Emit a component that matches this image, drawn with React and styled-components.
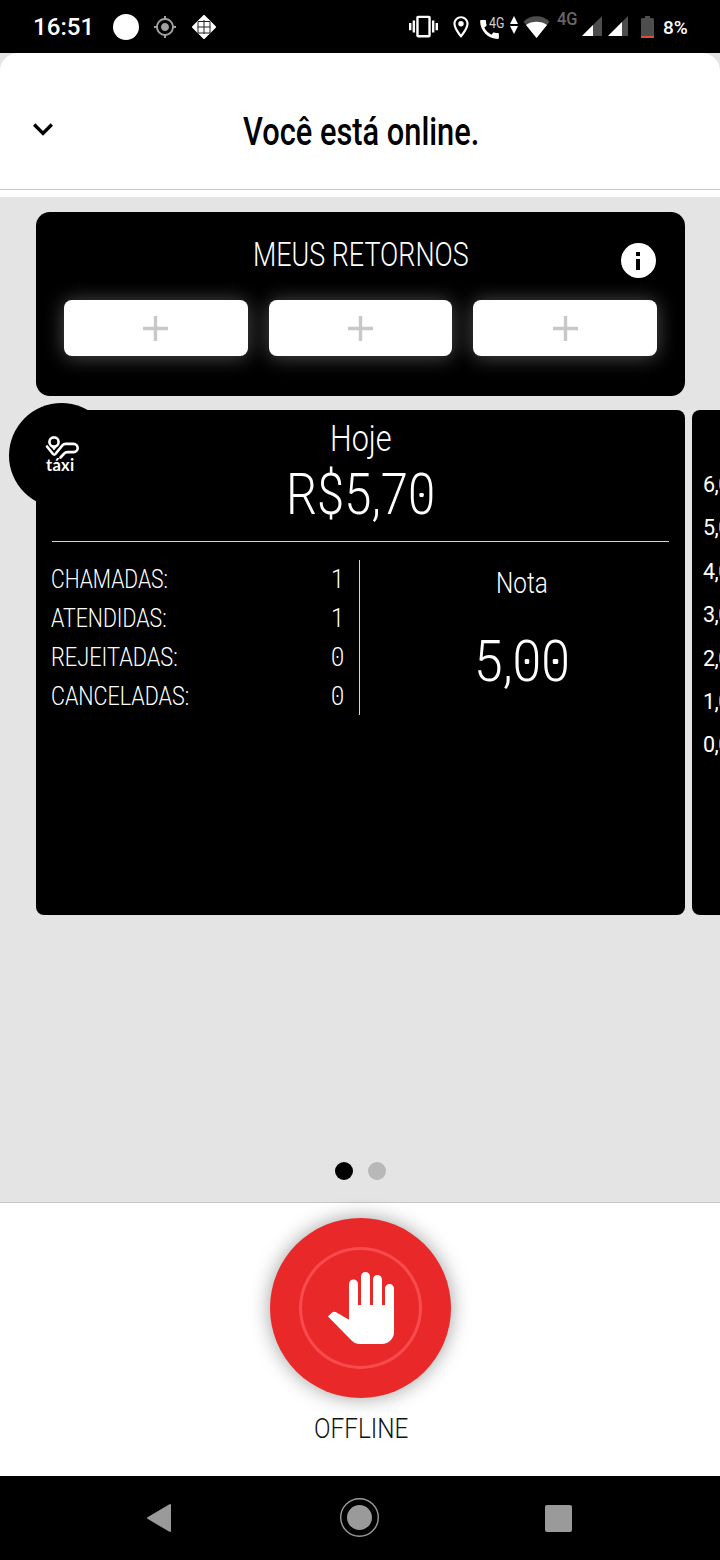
import React, { useLayoutEffect, useRef, useState } from "react";
import styled, { createGlobalStyle } from "styled-components";
import {
    MdVibration,
    MdOutlineLocationOn,
    MdCall,
    MdMyLocation,
    MdExpandMore,
    MdPanTool,
} from "react-icons/md";

const GlobalStyle = createGlobalStyle`
  * {
    box-sizing: border-box;
  }
  body {
    margin: 0;
    background: #000000;
    font-family: Roboto, "Liberation Sans", sans-serif;
  }
  svg {
    display: block;
    flex: none;
  }
`
const Screen = styled.div`
    width: 720px;
    height: 1560px;
    display: flex;
    flex-direction: column;
    background: #e4e4e4;
    overflow: hidden;
`

/* status bar */
const StatusBar = styled.div`
    height: 53px;
    flex: none;
    display: flex;
    justify-content: space-between;
    background: #000000;
    color: #ffffff;
    padding: 0 32px 0 33px;
`
const StatusGroup = styled.div`
    display: flex;
    align-items: center;
    height: 53px;
`
const StatusItem = styled.div`
    display: flex;
    flex: none;
    margin-left: ${(props) => props.$gap || 0}px;
    padding-top: ${(props) => props.$down || 0}px;
    padding-bottom: ${(props) => props.$up || 0}px;
    color: ${(props) => props.$color || '#ffffff'};
`
const WhiteDot = styled.div`
    width: 26px;
    height: 26px;
    border-radius: 50%;
    background: #ffffff;
`

/* text */
const FitBox = styled.span`
    display: block;
    flex: none;
    width: ${(props) => props.$width}px;
    height: ${(props) => props.$line}px;
    line-height: ${(props) => props.$line}px;
    font-size: ${(props) => props.$size}px;
    font-weight: ${(props) => props.$weight};
    color: ${(props) => props.$color};
`
const FitInner = styled.span`
    display: inline-block;
    white-space: pre;
    transform-origin: left center;
`
const Zero = styled.span`
    position: relative;
    display: inline-block;

    &::after {
      content: '';
      position: absolute;
      left: 50%;
      top: 50%;
      width: 0.09em;
      height: 0.075em;
      margin: -0.04em 0 0 -0.045em;
      border-radius: 30%;
      background: currentColor;
    }
`

/* header */
const Header = styled.header`
    height: 137px;
    flex: none;
    display: grid;
    grid-template-columns: 40px 1fr 40px;
    align-items: center;
    justify-items: center;
    padding: 22px 22px 0 23px;
    background: #ffffff;
    border-bottom: 1px solid #c6c6c6;
    border-radius: 18px 18px 0 0;
`
const HeaderGap = styled.div`
    height: 7px;
    flex: none;
    background: #ffffff;
`
const BackIcon = styled.div`
    color: #000000;
    margin-top: -7px;
`

/* content */
const Content = styled.main`
    flex: 1;
    display: flex;
    flex-direction: column;
    padding-top: 15px;
`
const ReturnsPanel = styled.section`
    width: 649px;
    height: 184px;
    flex: none;
    margin-left: 36px;
    padding: 24px 28px 0;
    border-radius: 14px;
    background: #000000;
`
const ReturnsHead = styled.div`
    display: grid;
    grid-template-columns: 37px 1fr 37px;
    justify-items: center;
    height: 64px;
`
const InfoIcon = styled.div`
    width: 35px;
    height: 35px;
    margin: 7px 1px 0 0;
    border-radius: 50%;
    background: #ffffff;
    display: flex;
    flex-direction: column;
    align-items: center;
    gap: 3px;
    padding-top: 9px;
`
const InfoMark = styled.span`
    width: 3.6px;
    height: ${(props) => props.$height}px;
    background: #000000;
`
const SlotList = styled.div`
    display: grid;
    grid-template-columns: repeat(3, 1fr);
    gap: 21px;
`
const Slot = styled.div`
    height: 56px;
    border-radius: 8px;
    background: #ffffff;
    box-shadow: 0 1px 20px rgba(255, 255, 255, 0.32);
    display: flex;
    align-items: center;
    justify-content: center;
`
const Carousel = styled.div`
    display: flex;
    gap: 7px;
    margin-top: 14px;
    padding-left: 36px;
`
const Card = styled.section`
    position: relative;
    width: 649px;
    height: 505px;
    flex: none;
    border-radius: 8px;
    background: #000000;
    color: #ffffff;
    padding: 0 16px;
`
const TaxiBadge = styled.div`
    position: absolute;
    left: -27px;
    top: -7px;
    width: 105px;
    height: 105px;
    border-radius: 50%;
    background: #000000;
    padding: 32px 0 0 36px;
`
const TaxiLabel = styled.div`
    font-family: Lato, sans-serif;
    font-size: 16.5px;
    line-height: 14px;
    font-weight: 700;
    letter-spacing: 0.3px;
    margin: -3px 0 0 1px;
`
const Summary = styled.div`
    height: 132px;
    display: flex;
    flex-direction: column;
    align-items: center;
    padding-top: 8px;
    border-bottom: 1px solid #d4d4d4;
`
const Details = styled.div`
    display: flex;
    padding-top: 18px;
`
const CountList = styled.div`
    width: 308px;
    height: 155px;
    padding-right: 15px;
    border-right: 1px solid #d4d4d4;
`
const CountRow = styled.div`
    display: flex;
    justify-content: space-between;
    height: 39px;
    margin-left: -1px;
`
const Rating = styled.div`
    flex: 1;
    display: flex;
    flex-direction: column;
    align-items: center;
    padding: 3px 0 0 15px;
`
const Axis = styled.div`
    padding: 53px 0 0 0;
    margin-left: -5px;
    font-size: 21.5px;
    letter-spacing: -0.5px;
`
const AxisLabel = styled.div`
    height: 43.4px;
    line-height: 44.5px;
`
const Pager = styled.div`
    display: flex;
    justify-content: center;
    gap: 15px;
    margin-top: auto;
    padding: 0 0 22px 1px;
`
const PagerDot = styled.span`
    width: 18px;
    height: 18px;
    border-radius: 50%;
    background: ${(props) => (props.$active ? '#000000' : '#b8b8b8')};
`

/* bottom */
const Footer = styled.footer`
    height: 274px;
    flex: none;
    display: flex;
    flex-direction: column;
    align-items: center;
    padding: 15px 0 0 1px;
    background: #ffffff;
    border-top: 1px solid #c8c8c8;
`
const OfflineButton = styled.button`
    width: 181px;
    height: 180px;
    flex: none;
    display: flex;
    align-items: center;
    justify-content: center;
    padding: 0;
    border: none;
    border-radius: 50%;
    background: #e92929;
    box-shadow: 0 0 20px rgba(0, 0, 0, 0.38);
`
const ButtonRing = styled.span`
    width: 123px;
    height: 122px;
    display: flex;
    align-items: center;
    justify-content: center;
    border: 3px solid #f94b4d;
    border-radius: 50%;
    color: #ffffff;
`
const FooterLabel = styled.div`
    margin-top: 13px;
`
const NavBar = styled.nav`
    height: 84px;
    flex: none;
    display: grid;
    grid-template-columns: 1fr 40px 1fr;
    align-items: center;
    background: #000000;
`
const NavCell = styled.div`
    display: flex;
    justify-content: ${(props) => props.$align || 'center'};
    padding: ${(props) => props.$pad || '0'};
`

// squeezes a line of text to the given width, the letters keep their height
function FitText({ text, width, size, line, weight = 400, color = '#ffffff', dotted }) {
    const inner = useRef(null);
    const [scale, setScale] = useState(1);

    useLayoutEffect(() => {
        setScale(width / inner.current.offsetWidth);
    }, [text, width, size]);

    return (
        <FitBox $width={width} $size={size} $line={line || Math.round(size * 1.2)} $weight={weight} $color={color}>
            <FitInner ref={inner} style={{ transform: `scaleX(${scale})` }}>
                {dotted
                    ? text.split('').map((char, index) => char === '0' ? <Zero key={index}>0</Zero> : char)
                    : text}
            </FitInner>
        </FitBox>
    );
}

function DiamondIcon() {
    return (
        <svg width="24" height="24" viewBox="0 0 24 24">
            <path d="M12 1 23 12 12 23 1 12z" fill="#fff" stroke="#fff" strokeWidth="2" strokeLinejoin="round" />
            <path d="M12 5v14M5.500 12h13M6 6.500h12v11.500H6z" fill="none" stroke="#222" strokeWidth="1" />
        </svg>
    );
}

function DataArrows() {
    return (
        <svg width="8" height="18" viewBox="0 0 8 18" fill="#fff">
            <path d="M4 0 8 8H0zM0 10h8l-4 8z" />
        </svg>
    );
}

function WifiIcon() {
    return (
        <svg width="27" height="22" viewBox="0 0 27 22">
            <path d="M13.500 22 0.500 5.800C4 2 8.500 0.300 13.500 0.300S23 2 26.500 5.800z" fill="#4d4d4d" />
            <path d="M13.500 22 3 9c3-2.400 6.700-3.300 10.500-3.300S21 6.600 24 9z" fill="#fff" />
        </svg>
    );
}

function SignalIcon({ level }) {
    return (
        <svg width="20" height="20" viewBox="0 0 20 20">
            <path d="M20 0v20H0z" fill="#4d4d4d" />
            <path d={`M${level} ${20 - level}V20H0z`} fill="#fff" />
        </svg>
    );
}

function BatteryIcon() {
    return (
        <svg width="13" height="22" viewBox="0 0 13 22">
            <path d="M4 0h5v2h2.500a1.500 1.500 0 0 1 1.500 1.500V20H0V3.500A1.500 1.500 0 0 1 1.500 2H4z" fill="#4d4d4d" />
            <path d="M0 20h13v2H0z" fill="#d9503f" />
        </svg>
    );
}

function PlusIcon() {
    return (
        <svg width="25" height="25" viewBox="0 0 25 25">
            <path d="M12.500 0v25M0 12.500h25" stroke="#c8c8c8" strokeWidth="3.400" />
        </svg>
    );
}

function TaxiLogo() {
    return (
        <svg width="35" height="26" viewBox="0 0 35 26" fill="none" stroke="#fff">
            <path d="M3.600 8.200 9 15.600l5.400-7.400z" fill="#fff" stroke="none" />
            <circle cx="9" cy="7" r="4.600" fill="#000" strokeWidth="2.600" />
            <path d="M2 11.500 8 19q1.200 1.400 2.400 0L17.400 10.400q1.200-1.500 3.200-1.500h8a4.100 4.100 0 0 1 0 8.200h-6.200q-2 0-3.200 1.400L15.500 22.500" strokeWidth="2.600" strokeLinecap="round" strokeLinejoin="round" />
        </svg>
    );
}

const counts = [
    { label: 'CHAMADAS:', value: '1', width: 117 },
    { label: 'ATENDIDAS:', value: '1', width: 116 },
    { label: 'REJEITADAS:', value: '0', width: 127 },
    { label: 'CANCELADAS:', value: '0', width: 138 },
]
const axisValues = ['6,00', '5,00', '4,00', '3,00', '2,00', '1,00', '0,00']

function App() {
    return ( <>
        <GlobalStyle />
        <Screen>
            <StatusBar>
                <StatusGroup>
                    <FitText text="16:51" width={61} size={24.5} weight={500} line={54} />
                    <StatusItem $gap={19}><WhiteDot /></StatusItem>
                    <StatusItem $gap={14} $color="#a0a0a0"><MdMyLocation size={24} /></StatusItem>
                    <StatusItem $gap={15}><DiamondIcon /></StatusItem>
                </StatusGroup>
                <StatusGroup>
                    <StatusItem><MdVibration size={29} /></StatusItem>
                    <StatusItem $gap={10}><MdOutlineLocationOn size={26} /></StatusItem>
                    <StatusItem $gap={3} $down={6}><MdCall size={25} /></StatusItem>
                    <StatusItem $gap={-13} $up={8}><FitText text="4G" width={15} size={14} line={16} color="#d0d0d0" /></StatusItem>
                    <StatusItem $gap={6} $up={4}><DataArrows /></StatusItem>
                    <StatusItem $gap={5}><WifiIcon /></StatusItem>
                    <StatusItem $gap={7} $up={16}><FitText text="4G" width={21} size={18} line={20} weight={500} color="#666666" /></StatusItem>
                    <StatusItem $gap={4} $up={2}><SignalIcon level={11} /></StatusItem>
                    <StatusItem $gap={6} $up={2}><SignalIcon level={14} /></StatusItem>
                    <StatusItem $gap={13}><BatteryIcon /></StatusItem>
                    <StatusItem $gap={9} $down={2}><FitText text="8%" width={25} size={19} line={20} weight={500} /></StatusItem>
                </StatusGroup>
            </StatusBar>

            <Header>
                <BackIcon><MdExpandMore size={40} /></BackIcon>
                <FitText text="Você está online." width={236} size={38.5} weight={500} color="#000000" />
            </Header>
            <HeaderGap />

            <Content>
                <ReturnsPanel>
                    <ReturnsHead>
                        <span />
                        <FitText text="MEUS RETORNOS" width={216} size={34} line={37} weight={350} />
                        <InfoIcon>
                            <InfoMark $height={4} />
                            <InfoMark $height={11} />
                        </InfoIcon>
                    </ReturnsHead>
                    <SlotList>
                        <Slot><PlusIcon /></Slot>
                        <Slot><PlusIcon /></Slot>
                        <Slot><PlusIcon /></Slot>
                    </SlotList>
                </ReturnsPanel>

                <Carousel>
                    <Card>
                        <TaxiBadge>
                            <TaxiLogo />
                            <TaxiLabel>táxi</TaxiLabel>
                        </TaxiBadge>
                        <Summary>
                            <FitText text="Hoje" width={62} size={36} line={43} weight={350} />
                            <FitText text="R$5,70" width={149} size={56.5} line={69} weight={350} dotted />
                        </Summary>
                        <Details>
                            <CountList>
                                {counts.map((item) => (
                                    <CountRow key={item.label}>
                                        <FitText text={item.label} width={item.width} size={25.5} line={39} weight={350} />
                                        <FitText text={item.value} width={13} size={25.5} line={39} weight={350} dotted />
                                    </CountRow>
                                ))}
                            </CountList>
                            <Rating>
                                <FitText text="Nota" width={52} size={29} line={40} weight={350} />
                                <FitText text="5,00" width={96} size={57} line={117} weight={350} dotted />
                            </Rating>
                        </Details>
                    </Card>
                    <Card>
                        <Axis>
                            {axisValues.map((value) => (
                                <AxisLabel key={value}>{value}</AxisLabel>
                            ))}
                        </Axis>
                    </Card>
                </Carousel>

                <Pager>
                    <PagerDot $active />
                    <PagerDot />
                </Pager>
            </Content>

            <Footer>
                <OfflineButton>
                    <ButtonRing><MdPanTool size={72} /></ButtonRing>
                </OfflineButton>
                <FooterLabel>
                    <FitText text="OFFLINE" width={94} size={28.5} line={36} weight={300} color="#111111" />
                </FooterLabel>
            </Footer>

            <NavBar>
                <NavCell $align="flex-start" $pad="0 0 0 146px">
                    <svg width="26" height="30" viewBox="0 0 26 30">
                        <path d="M24 2v26L2 15z" fill="#9a9a9a" stroke="#9a9a9a" strokeWidth="2" strokeLinejoin="round" />
                    </svg>
                </NavCell>
                <NavCell>
                    <svg width="40" height="40" viewBox="0 0 40 40">
                        <circle cx="19.500" cy="19.500" r="18.800" fill="none" stroke="#9a9a9a" strokeWidth="1.400" />
                        <circle cx="19.500" cy="19.500" r="12.500" fill="#9a9a9a" />
                    </svg>
                </NavCell>
                <NavCell $align="flex-end" $pad="1px 148px 0 0">
                    <svg width="27" height="27" viewBox="0 0 27 27">
                        <rect width="27" height="27" rx="2" fill="#9a9a9a" />
                    </svg>
                </NavCell>
            </NavBar>
        </Screen>
    </> );
}

export default App;
